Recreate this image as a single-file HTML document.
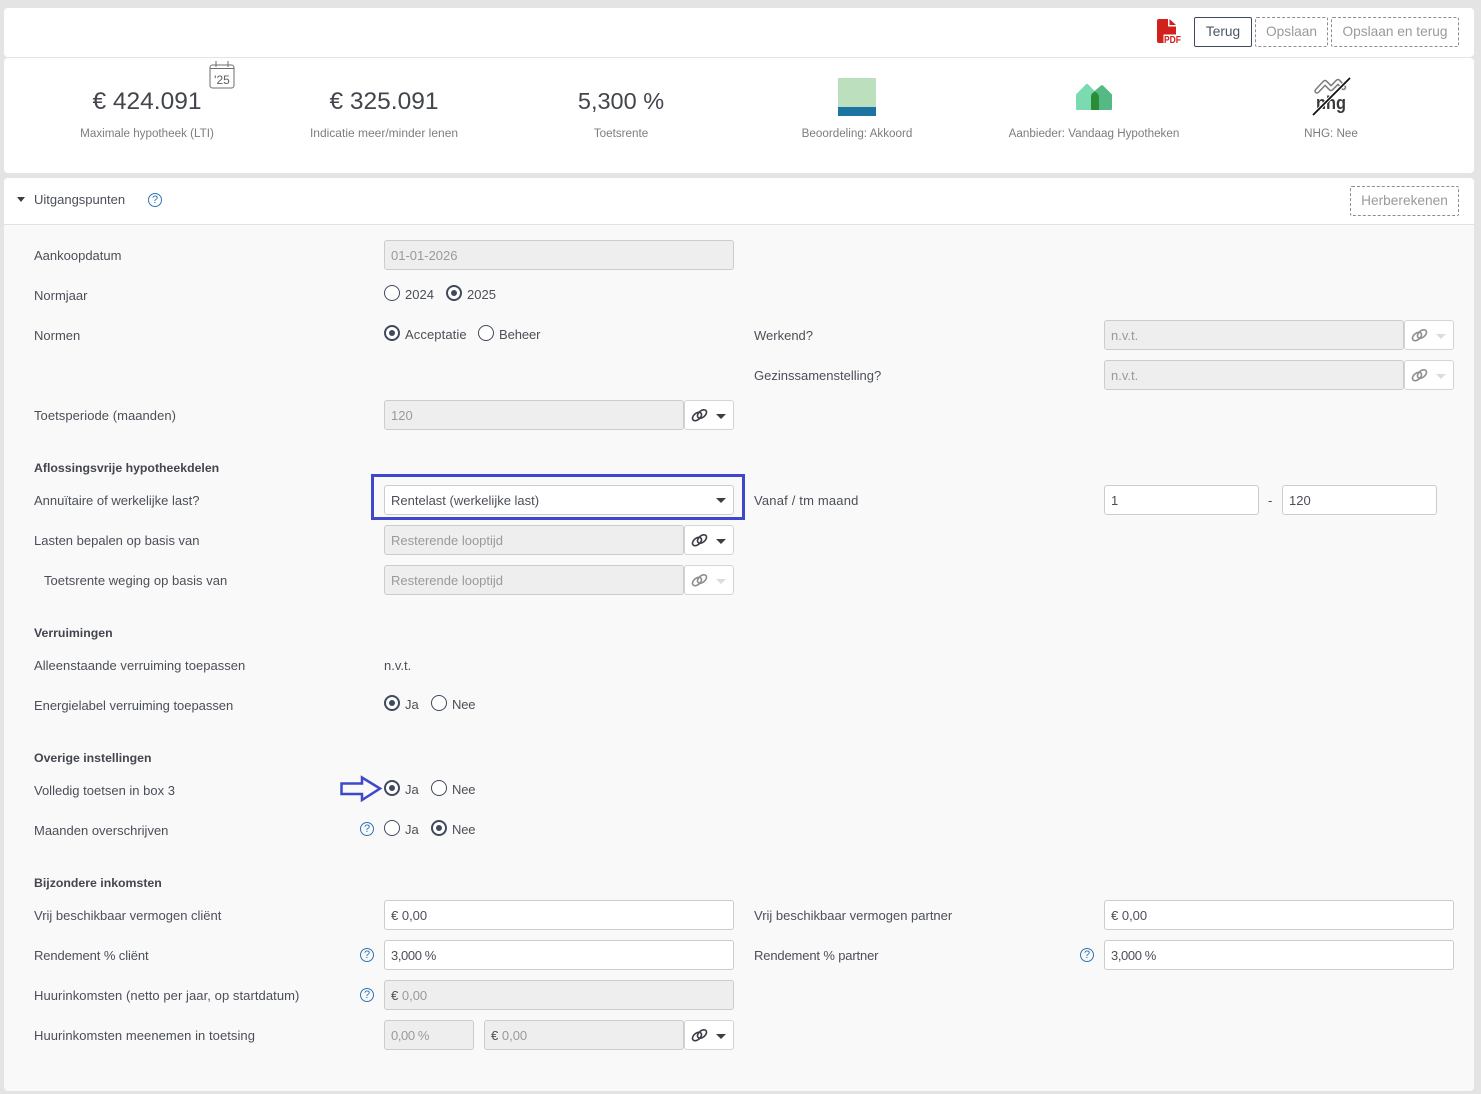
<!DOCTYPE html>
<html lang="nl"><head><meta charset="utf-8"><title>Uitgangspunten</title>
<style>
*{box-sizing:border-box}
html,body{margin:0;padding:0}
body{width:1481px;height:1094px;background:#e4e4e4;position:relative;overflow:hidden;font-family:"Liberation Sans",sans-serif;font-size:13px;color:#4b4f57}
.a{position:absolute}
.card{position:absolute;left:4px;width:1470px;background:#fff;border-radius:4px}
.t{position:absolute;white-space:nowrap;line-height:16px}
.l{position:absolute;left:34px;white-space:nowrap;line-height:16px}
.b{font-weight:bold;font-size:12.3px;color:#43464d}
.big{position:absolute;white-space:nowrap;font-size:24.5px;line-height:30px;color:#42454c;text-align:center;transform:translateX(-50%)}
.cap{position:absolute;white-space:nowrap;font-size:11.65px;line-height:16px;color:#7d7d7d;transform:translateX(-50%)}
.in{position:absolute;height:30px;border:1px solid #ccc;border-radius:3px;background:#fff;line-height:30px;padding-left:6px;white-space:nowrap;color:#4b4f57}
.d{background:#eee;color:#9a9a9a}
.d i{font-style:normal;color:#4b4f57}
.ln{position:absolute;width:50px;height:30px;border:1px solid #d4d4d4;border-radius:3px;background:#fff}
.ln svg{position:absolute;left:6px;top:6px}
.car{position:absolute;width:0;height:0;border-left:5px solid transparent;border-right:5px solid transparent;border-top:5px solid #3b3e45}
.off .car,.car.off{border-top-color:#dcdcdc}
.r{position:absolute;width:16px;height:16px;border:1.3px solid #3f4a5c;border-radius:50%;background:#fff}
.r.on{border-width:2px}
.r.on:after{content:"";position:absolute;left:3px;top:3px;width:6px;height:6px;border-radius:50%;background:#3f4a5c}
.q{position:absolute;width:14px;height:14px;border:1.3px solid #2f75b5;border-radius:50%;color:#2f75b5;font-size:11px;line-height:12px;text-align:center}
.btn{position:absolute;top:17px;height:30px;border-radius:2px;line-height:27px;text-align:center;font-size:13.7px;color:#9a9a9a;border:1px dashed #8e8e8e}
</style></head><body>
<svg width="0" height="0" style="position:absolute"><defs>
<symbol id="link" viewBox="0 0 18 16"><g fill="none" stroke="currentColor" stroke-width="1.6"><ellipse cx="6" cy="9.500" rx="5.200" ry="3.300" transform="rotate(-40 6 9.500)"/><ellipse cx="11" cy="7" rx="5.200" ry="3.300" transform="rotate(-40 11 7)"/></g></symbol>
</defs></svg>

<div class="card" style="top:8px;height:49px"></div>
<div class="card" style="top:58px;height:115px"></div>
<div class="card" style="top:178px;height:913px;background:#f9f9f9"></div>
<div class="card" style="top:178px;height:47px;border-bottom:1px solid #e2e2e2;border-radius:4px 4px 0 0"></div>

<!-- PDF icon -->
<svg class="a" style="left:1157px;top:18px" width="25" height="27" viewBox="0 0 25 27"><path d="M2 1h9v7.500h8V25H2a2 2 0 0 1-2-2V3a2 2 0 0 1 2-2z" fill="#d2201c"/><path d="M12.500 1l6.500 6h-6.500z" fill="#d2201c"/><rect x="6.500" y="16.500" width="18.500" height="10" fill="#fff"/><text x="7" y="25" font-family="Liberation Sans" font-weight="bold" font-size="10" fill="#d2201c" textLength="17" lengthAdjust="spacingAndGlyphs">PDF</text></svg>
<div class="btn" style="left:1194px;width:58px;border:1px solid #3f4a5c;color:#4b5566">Terug</div>
<div class="btn" style="left:1255px;width:73px">Opslaan</div>
<div class="btn" style="left:1331px;width:128px">Opslaan en terug</div>

<!-- Summary -->
<svg class="a" style="left:209px;top:60px;color:#6d6d6d" width="26" height="29" viewBox="0 0 26 29"><rect x="1" y="5" width="24" height="23" rx="2.500" fill="#fff" stroke="#6d6d6d" stroke-width="1"/><path d="M1 8.500h24M7 1v6M19 1v6" stroke="#6d6d6d" fill="none"/><text x="13" y="24" text-anchor="middle" font-family="Liberation Sans" font-size="12" fill="#5e5e5e">'25</text></svg>
<div class="big" style="left:147px;top:87px">€ 424.091</div>
<div class="cap" style="left:147px;top:126px">Maximale hypotheek (LTI)</div>
<div class="big" style="left:384px;top:87px">€ 325.091</div>
<div class="cap" style="left:384px;top:125px;font-size:12px">Indicatie meer/minder lenen</div>
<div class="big" style="left:621px;top:86px;font-size:23.5px">5,300 %</div>
<div class="cap" style="left:621px;top:126px">Toetsrente</div>
<div class="a" style="left:838px;top:78px;width:38px;height:29px;background:#bce0bd"></div>
<div class="a" style="left:838px;top:107px;width:38px;height:9px;background:#1c74a2"></div>
<div class="cap" style="left:857px;top:126px">Beoordeling: Akkoord</div>
<svg class="a" style="left:1076px;top:83px" width="36" height="27" viewBox="0 0 36 27"><path d="M0 11.500L10 1.200q1-1 2 0L22 11.500V27H1a1 1 0 0 1-1-1z" fill="#7bdab0"/><path d="M15 11L25 2.500q1-.8 2 0L36 11.500V26a1 1 0 0 1-1 1H15z" fill="#55b985"/><path d="M15 14q0-3 4-5.500q4 2.500 4 5.500V27h-7a1 1 0 0 1-1-1z" fill="#2b8c37"/></svg>
<div class="cap" style="left:1094px;top:126px">Aanbieder: Vandaag Hypotheken</div>
<svg class="a" style="left:1312px;top:76px" width="40" height="42" viewBox="0 0 40 42"><g fill="none" stroke-linecap="round" stroke-linejoin="round"><path d="M5 15L13 6.500L19 12.500L26 5.500L31.500 11.500" stroke="#7e7e7e" stroke-width="5.500"/><path d="M5 15L13 6.500L19 12.500L26 5.500L31.500 11.500" stroke="#fff" stroke-width="2.400"/></g><text x="19" y="33" text-anchor="middle" font-family="Liberation Sans" font-weight="bold" font-size="18" fill="#3a3a3a" textLength="30" lengthAdjust="spacingAndGlyphs">nhg</text><path d="M1 39L38 2" stroke="#fff" stroke-width="3.500"/><path d="M1 39L38 2" stroke="#111" stroke-width="1.800"/></svg>
<div class="cap" style="left:1331px;top:126px">NHG: Nee</div>

<!-- Section header -->
<div class="car" style="left:17px;top:197px;border-left-width:4.500px;border-right-width:4.500px"></div>
<div class="t" style="left:34px;top:192px">Uitgangspunten</div>
<div class="q" style="left:148px;top:193px">?</div>
<div class="btn" style="left:1350px;top:186px;width:109px">Herberekenen</div>

<!-- Column 1 -->
<div class="l" style="top:248px">Aankoopdatum</div>
<div class="in d" style="left:384px;top:240px;width:350px">01-01-2026</div>

<div class="l" style="top:288px">Normjaar</div>
<div class="r" style="left:384px;top:285px"></div><div class="t" style="left:405px;top:287px">2024</div>
<div class="r on" style="left:446px;top:285px"></div><div class="t" style="left:467px;top:287px">2025</div>

<div class="l" style="top:328px">Normen</div>
<div class="r on" style="left:384px;top:325px"></div><div class="t" style="left:405px;top:327px;letter-spacing:.1px">Acceptatie</div>
<div class="r" style="left:478px;top:325px"></div><div class="t" style="left:499px;top:327px;letter-spacing:-.1px">Beheer</div>

<div class="l" style="top:408px;letter-spacing:.05px">Toetsperiode (maanden)</div>
<div class="in d" style="left:384px;top:400px;width:300px">120</div>
<div class="ln" style="left:684px;top:400px;color:#3b3e45"><svg width="18" height="16"><use href="#link"/></svg><div class="car" style="left:31px;top:13px"></div></div>

<div class="l b" style="top:460px">Aflossingsvrije hypotheekdelen</div>
<div class="l" style="top:493px">Annuïtaire of werkelijke last?</div>
<div class="a" style="left:371px;top:474px;width:374px;height:46px;border:3px solid #3f48cc"></div>
<div class="in" style="left:384px;top:485px;width:350px">Rentelast (werkelijke last)</div>
<div class="car" style="left:716px;top:498px"></div>

<div class="l" style="top:533px">Lasten bepalen op basis van</div>
<div class="in d" style="left:384px;top:525px;width:300px">Resterende looptijd</div>
<div class="ln" style="left:684px;top:525px;color:#3b3e45"><svg width="18" height="16"><use href="#link"/></svg><div class="car" style="left:31px;top:13px"></div></div>

<div class="l" style="left:44px;top:573px;letter-spacing:.04px">Toetsrente weging op basis van</div>
<div class="in d" style="left:384px;top:565px;width:300px">Resterende looptijd</div>
<div class="ln off" style="left:684px;top:565px;color:#8f8f8f"><svg width="18" height="16"><use href="#link"/></svg><div class="car" style="left:31px;top:13px"></div></div>

<div class="l b" style="top:625px">Verruimingen</div>
<div class="l" style="top:658px;letter-spacing:.03px">Alleenstaande verruiming toepassen</div>
<div class="t" style="left:384px;top:658px">n.v.t.</div>

<div class="l" style="top:698px;letter-spacing:-.03px">Energielabel verruiming toepassen</div>
<div class="r on" style="left:384px;top:695px"></div><div class="t" style="left:405px;top:697px">Ja</div>
<div class="r" style="left:431px;top:695px"></div><div class="t" style="left:452px;top:697px;letter-spacing:-.2px">Nee</div>

<div class="l b" style="top:750px">Overige instellingen</div>
<div class="l" style="top:783px">Volledig toetsen in box 3</div>
<svg class="a" style="left:339px;top:775px" width="44" height="28" viewBox="0 0 44 28"><path d="M2.500 8.500H23V2.500L41 13.500 23 25V19H2.500z" fill="none" stroke="#3f48cc" stroke-width="2.500"/></svg>
<div class="r on" style="left:384px;top:780px"></div><div class="t" style="left:405px;top:782px">Ja</div>
<div class="r" style="left:431px;top:780px"></div><div class="t" style="left:452px;top:782px;letter-spacing:-.2px">Nee</div>

<div class="l" style="top:823px">Maanden overschrijven</div>
<div class="q" style="left:360px;top:822px">?</div>
<div class="r" style="left:384px;top:820px"></div><div class="t" style="left:405px;top:822px">Ja</div>
<div class="r on" style="left:431px;top:820px"></div><div class="t" style="left:452px;top:822px;letter-spacing:-.2px">Nee</div>

<div class="l b" style="top:875px">Bijzondere inkomsten</div>
<div class="l" style="top:908px">Vrij beschikbaar vermogen cliënt</div>
<div class="in" style="left:384px;top:900px;width:350px">€ 0,00</div>
<div class="l" style="top:948px;letter-spacing:-.1px">Rendement % cliënt</div>
<div class="q" style="left:360px;top:948px">?</div>
<div class="in" style="left:384px;top:940px;width:350px;letter-spacing:-.4px">3,000 %</div>
<div class="l" style="top:988px;letter-spacing:.07px">Huurinkomsten (netto per jaar, op startdatum)</div>
<div class="q" style="left:360px;top:988px">?</div>
<div class="in d" style="left:384px;top:980px;width:350px"><i>€</i> 0,00</div>
<div class="l" style="top:1028px;letter-spacing:.06px">Huurinkomsten meenemen in toetsing</div>
<div class="in d" style="left:384px;top:1020px;width:90px;letter-spacing:-.4px">0,00 %</div>
<div class="in d" style="left:484px;top:1020px;width:200px"><i>€</i> 0,00</div>
<div class="ln" style="left:684px;top:1020px;color:#3b3e45"><svg width="18" height="16"><use href="#link"/></svg><div class="car" style="left:31px;top:13px"></div></div>

<!-- Column 2 -->
<div class="t" style="left:754px;top:328px">Werkend?</div>
<div class="in d" style="left:1104px;top:320px;width:300px">n.v.t.</div>
<div class="ln off" style="left:1404px;top:320px;color:#8f8f8f"><svg width="18" height="16"><use href="#link"/></svg><div class="car" style="left:31px;top:13px"></div></div>

<div class="t" style="left:754px;top:368px">Gezinssamenstelling?</div>
<div class="in d" style="left:1104px;top:360px;width:300px">n.v.t.</div>
<div class="ln off" style="left:1404px;top:360px;color:#8f8f8f"><svg width="18" height="16"><use href="#link"/></svg><div class="car" style="left:31px;top:13px"></div></div>

<div class="t" style="left:754px;top:493px;letter-spacing:.18px">Vanaf / tm maand</div>
<div class="in" style="left:1104px;top:485px;width:155px">1</div>
<div class="t" style="left:1268px;top:493px">-</div>
<div class="in" style="left:1282px;top:485px;width:155px">120</div>

<div class="t" style="left:754px;top:908px">Vrij beschikbaar vermogen partner</div>
<div class="in" style="left:1104px;top:900px;width:350px">€ 0,00</div>
<div class="t" style="left:754px;top:948px;letter-spacing:-.15px">Rendement % partner</div>
<div class="q" style="left:1080px;top:948px">?</div>
<div class="in" style="left:1104px;top:940px;width:350px;letter-spacing:-.4px">3,000 %</div>
</body></html>
